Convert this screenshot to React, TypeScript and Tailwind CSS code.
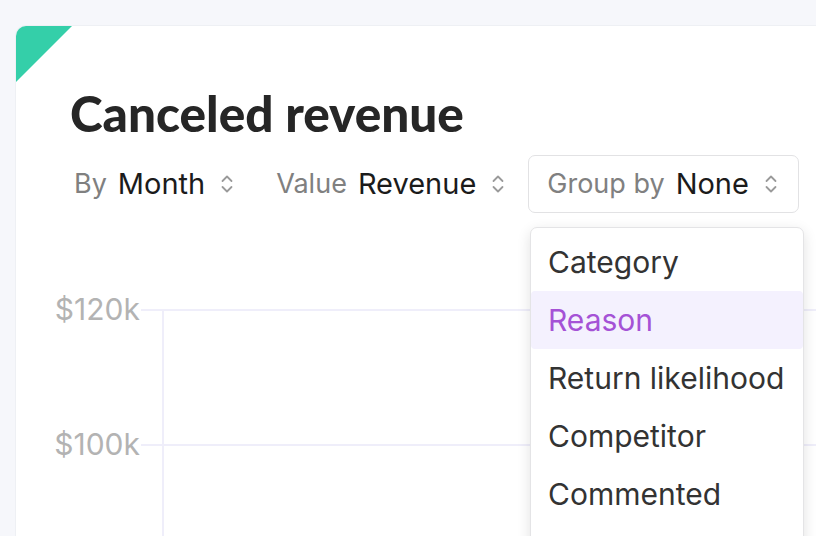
import { ReactNode } from "react";

const GROUP_OPTIONS = ["Category", "Reason", "Return likelihood", "Competitor", "Commented"];
const TICKS = ["$120k", "$100k"];

function UpDown() {
  return (
    <svg width="14" height="22" viewBox="0 0 14 22" fill="none" stroke="currentColor" strokeWidth="1.8" strokeLinecap="round" strokeLinejoin="round">
      <polyline points="2.5,8 7,3.5 11.5,8" />
      <polyline points="2.5,14 7,18.5 11.5,14" />
    </svg>
  );
}

function Picker({ label, value, boxed }: { label: string; value: string; boxed?: boolean }) {
  return (
    <div
      className={
        "shrink-0 whitespace-nowrap flex items-center h-[58px] pl-[18px] pr-[20px] rounded-[7px] border " +
        (boxed ? "border-[#e2e2e4] bg-white" : "border-transparent")
      }
    >
      <span className="text-[27px] text-[#808080]">{label}</span>
      <span className="ml-[11px] text-[29px] text-[#1b1b1b]">{value}</span>
      <span className="ml-[15px] text-[#9a9a9a]">
        <UpDown />
      </span>
    </div>
  );
}

function Menu({ children }: { children: ReactNode }) {
  return (
    <div className="absolute left-[514px] top-[201px] w-[274px] rounded-[7px] bg-white border border-[#e4e4e6] shadow-[0_4px_14px_rgba(0,0,0,0.12)] pt-[5px] pb-[40px]">
      {children}
    </div>
  );
}

export default function App() {
  return (
    <div className="h-[536px] overflow-hidden bg-[#f6f7fb] pt-[26px] pl-4" style={{ fontFamily: "Inter, 'Noto Sans', sans-serif" }}>
      <div className="relative h-[600px] bg-white rounded-tl-[10px] shadow-[0_0_0_1px_#eef0f4]">
        {/* corner badge */}
        <div className="absolute left-0 top-0 w-14 h-14 rounded-tl-[10px] bg-[#34cfa9] [clip-path:polygon(0_0,100%_0,0_100%)]" />

        <h1
          className="pl-[54px] pt-[63px] text-[49.5px] leading-none font-black text-[#262626] whitespace-nowrap"
          style={{ fontFamily: "Lato, Inter, sans-serif" }}
        >
          Canceled revenue
        </h1>

        <div className="mt-[16px] pl-[39px] flex items-center gap-[2px] leading-none">
          <Picker label="By" value="Month" />
          <Picker label="Value" value="Revenue" />
          <Picker label="Group by" value="None" boxed />
        </div>

        {/* chart grid */}
        <div className="mt-[96px] flex text-[30px] leading-[34px] text-[#b3b3b3]">
          <div className="w-[146px] flex flex-col">
            {TICKS.map((t) => (
              <div key={t} className="h-[135px] flex items-start">
                <span className="flex-1 text-right -mt-[17px] pr-px">{t}</span>
                <div className="w-[21px] border-t-2 border-[#efeefa]" />
              </div>
            ))}
          </div>
          <div className="flex-1 h-[300px] border-l-2 border-[#efeefa] flex flex-col">
            {TICKS.map((t) => (
              <div key={t} className="h-[135px] border-t-2 border-[#efeefa]" />
            ))}
          </div>
        </div>

        <Menu>
          {GROUP_OPTIONS.map((o) => (
            <div
              key={o}
              className={
                "h-[58px] flex items-center px-[17px] text-[30px] whitespace-nowrap " +
                (o === "Reason" ? "bg-[#f4f1fe] text-[#a552d6] rounded-[4px]" : "text-[#333333]")
              }
            >
              {o}
            </div>
          ))}
        </Menu>
      </div>
    </div>
  );
}
